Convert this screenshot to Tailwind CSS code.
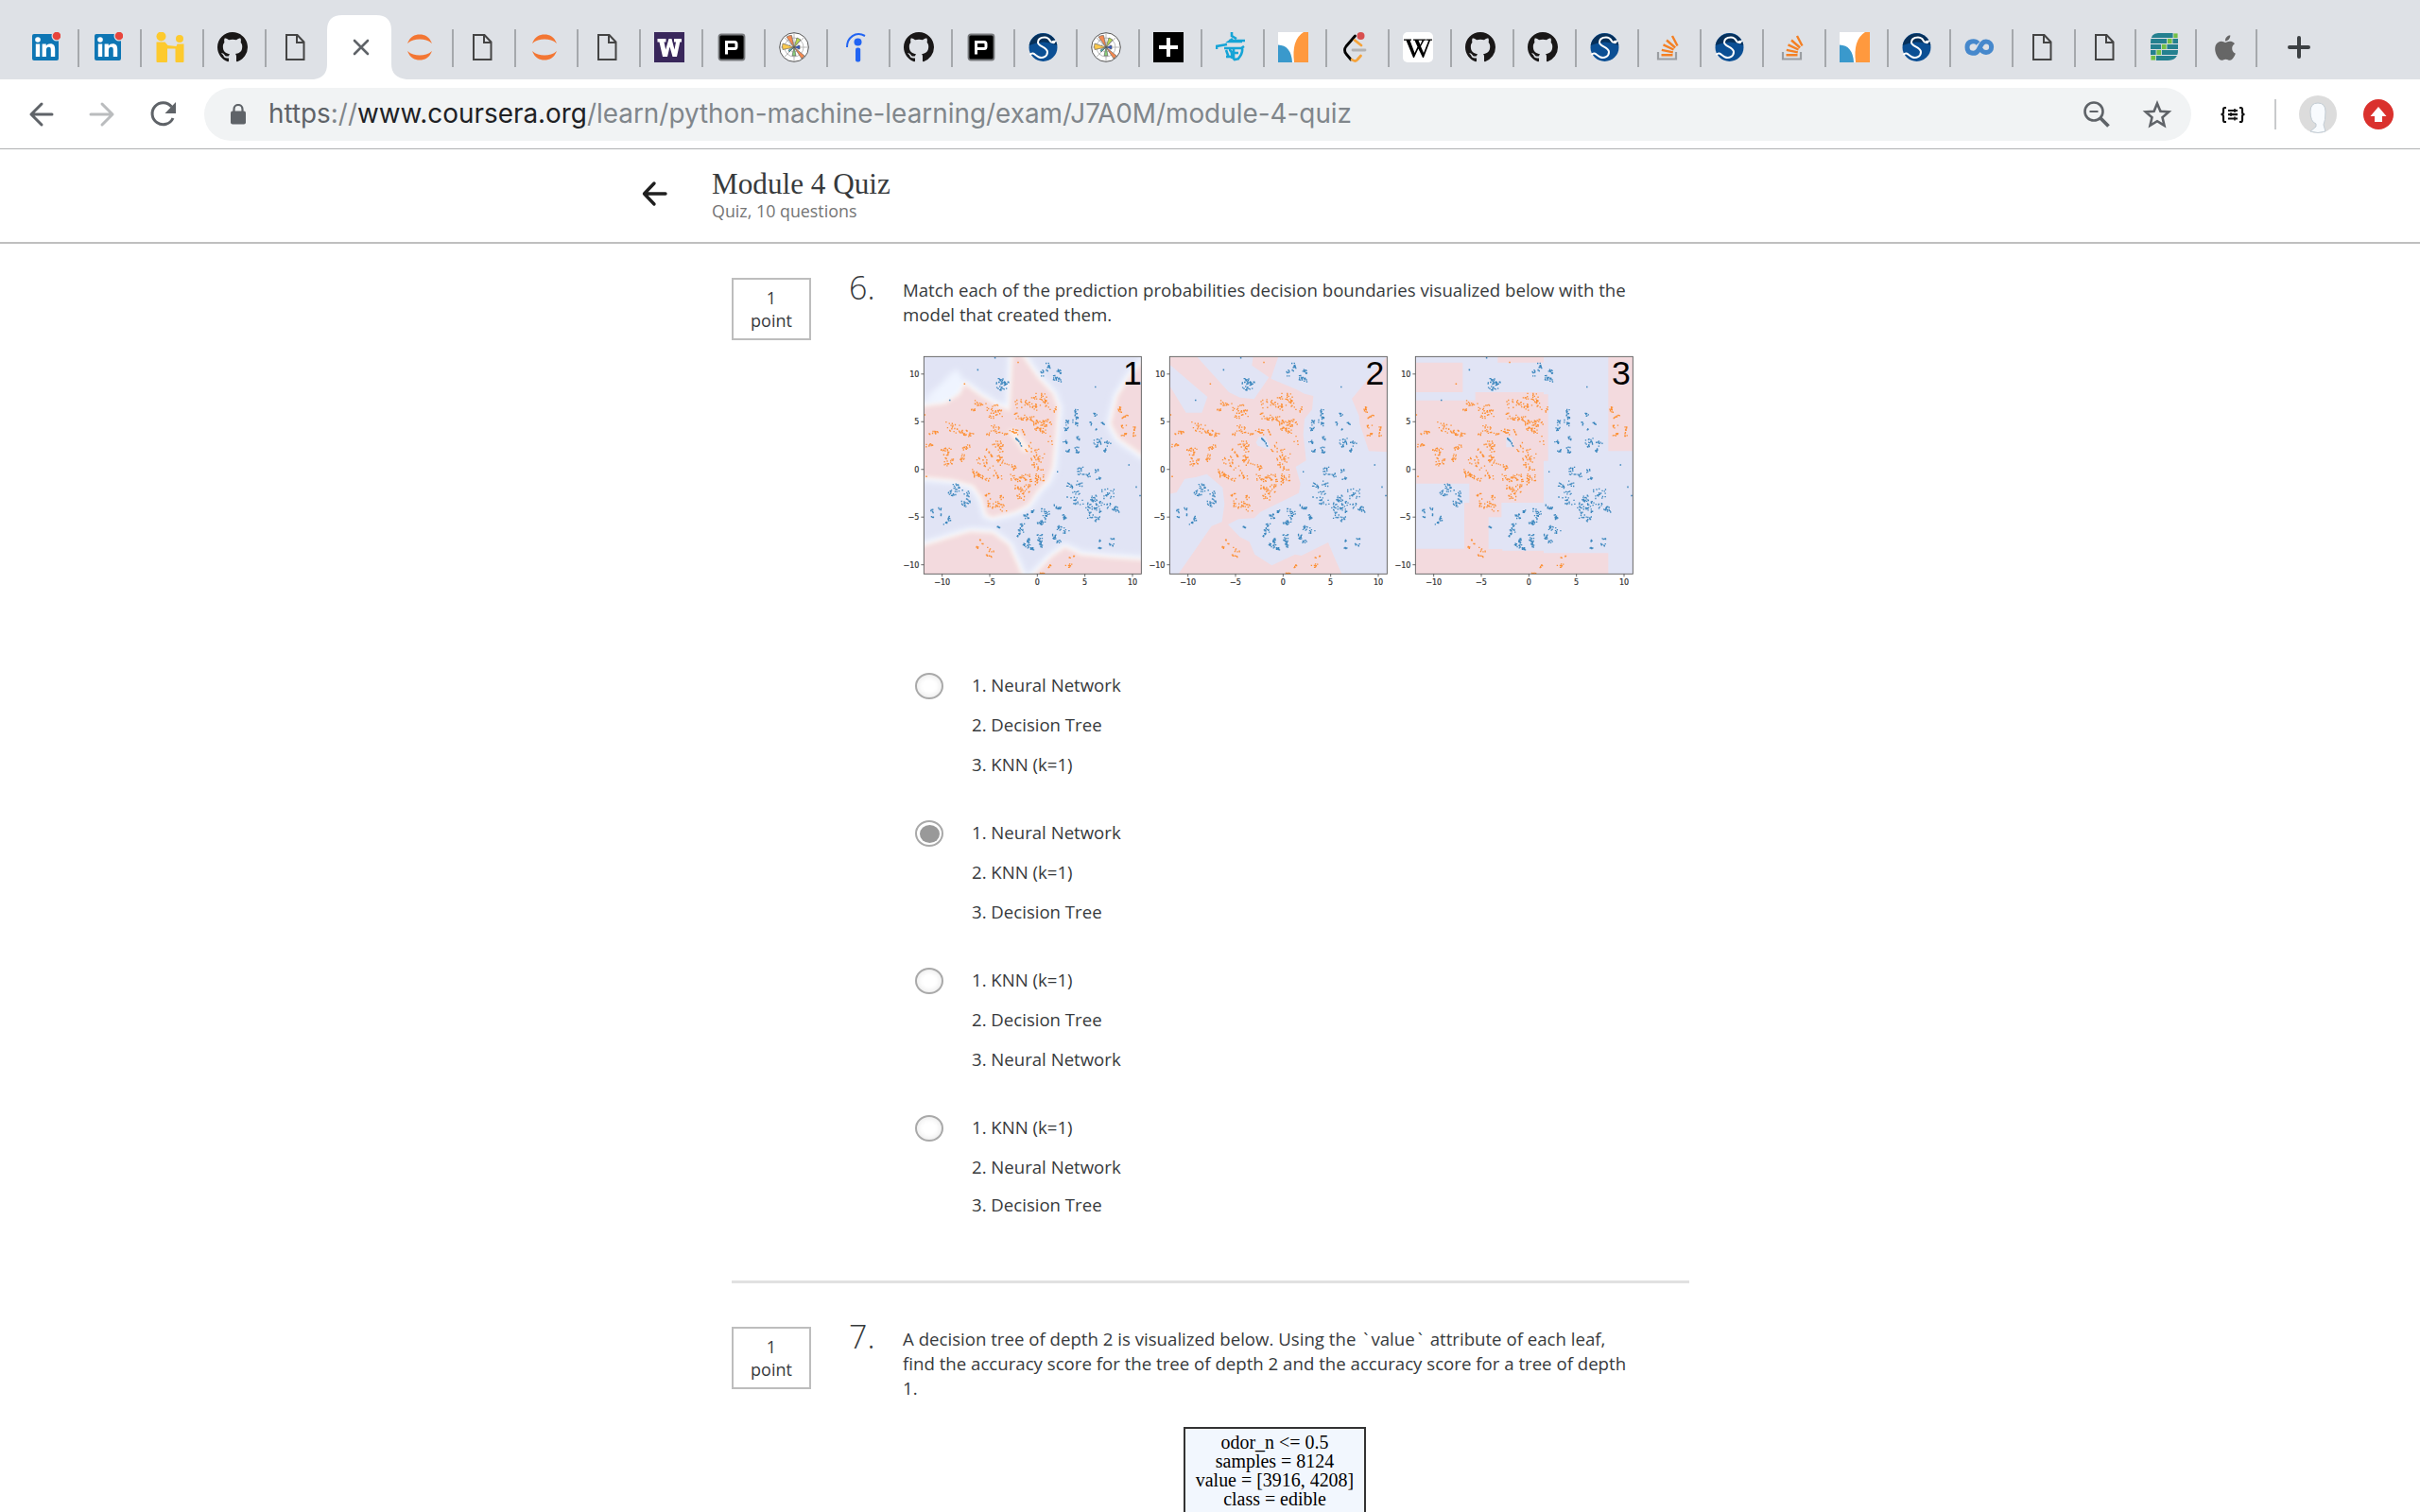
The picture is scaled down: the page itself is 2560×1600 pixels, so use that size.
<!DOCTYPE html>
<html lang="en">
<head>
<meta charset="utf-8">
<title>Module 4 Quiz</title>
<script src="https://cdn.jsdelivr.net/npm/@tailwindcss/browser@4"></script>
</head>
<body class="w-[2560px] h-[1600px] overflow-hidden bg-white font-['Open_Sans',sans-serif] text-[#373a3c]">
<svg class="hidden">
  <symbol id="i-linkedin" viewBox="0 0 32 32"><rect x="2" y="2" width="28" height="28" rx="2" fill="#0e76b4"/><g fill="#fff"><circle cx="8" cy="8" r="2.8"/><rect x="5.8" y="12.5" width="4.4" height="13.5"/><path d="M12.6 12.5h4.2v2c1-1.600 2.600-2.300 4.400-2.300 3.800 0 5 2.300 5 6v7.800h-4.400v-7c0-2-.4-3.200-2.200-3.200-2 0-2.700 1.400-2.700 3.200v7h-4.300z"/></g><circle cx="28" cy="4" r="4.900" fill="#e8453c" stroke="#dee1e6" stroke-width="1.200"/></symbol>
  <symbol id="i-hi" viewBox="0 0 32 32"><g fill="#fdca2e"><circle cx="6.500" cy="4.500" r="5"/><circle cx="26" cy="7" r="4"/><path d="M1.500 10.500h9l3 3.500 9 1 1-2.500h7V31q0 1-1 1h-7q-1 0-1-1V17.500h-8.500V31q0 1-1 1h-9.500q-1 0-1-1z"/></g></symbol>
  <symbol id="i-github" viewBox="0 0 16 16"><path fill="#191717" d="M8 0C3.580 0 0 3.580 0 8c0 3.540 2.290 6.530 5.470 7.590.4.070.55-.17.55-.38 0-.19-.01-.82-.01-1.490-2.010.37-2.530-.49-2.690-.94-.09-.23-.48-.94-.82-1.130-.28-.15-.68-.52-.01-.53.63-.01 1.080.58 1.230.82.720 1.210 1.870.87 2.330.66.070-.52.280-.87.510-1.070-1.780-.2-3.640-.89-3.640-3.950 0-.87.310-1.590.82-2.150-.08-.2-.36-1.020.08-2.120 0 0 .67-.21 2.200.82.640-.18 1.320-.27 2-.27s1.360.09 2 .27c1.530-1.040 2.200-.82 2.200-.82.440 1.100.16 1.920.08 2.120.51.560.82 1.270.82 2.150 0 3.070-1.870 3.750-3.650 3.950.29.250.54.730.54 1.480 0 1.070-.01 1.930-.01 2.200 0 .21.15.46.55.38A8.010 8.010 0 0 0 16 8c0-4.420-3.580-8-8-8z"/></symbol>
  <symbol id="i-doc" viewBox="0 0 32 32"><path d="M7 3h11.500l7 7.500V29H7zM18 3v8h7.500" fill="none" stroke="#444" stroke-width="2"/></symbol>
  <symbol id="i-jupyter" viewBox="0 0 32 32"><path fill="#f37633" d="M3 12C6 4.500 10.500 2.500 16 2.500S26 4.500 29 12C25 8.500 21 7.500 16 7.500S7 8.500 3 12zM3 20c4 3.500 8 4.500 13 4.500s9-1 13-4.500c-3 7.500-7.500 9.500-13 9.500S6 27.500 3 20z"/></symbol>
  <symbol id="i-uw" viewBox="0 0 32 32"><path fill="#39275b" d="M0 0h32v32H0z"/><path fill="#fff" d="M3.500 7h9v3.500h-2l1.700 8L15.500 7h3l3 11.500 1.500-8h-2V7h8v3.500h-1.700L24 26h-4.500L16.500 15.500 14 26H9L5.500 10.500h-2z"/></symbol>
  <symbol id="i-p" viewBox="0 0 32 32"><rect x="2.500" y="2.500" width="27" height="27" rx="2.500" fill="#000" stroke="#77797c" stroke-width="1.800"/><path d="M10.500 23.500V10.500H19q2 0 2 2v3q0 2-2 2h-8" fill="none" stroke="#fff" stroke-width="3"/></symbol>
  <symbol id="i-mpl" viewBox="0 0 32 32"><circle cx="16" cy="16" r="15.300" fill="#fff" stroke="#555" stroke-width="1"/><g fill="none" stroke="#aaa" stroke-width=".8"><circle cx="16" cy="16" r="5"/><circle cx="16" cy="16" r="10"/><path d="M1 16h30M16 1v30M5.500 5.500l21 21M26.500 5.500l-21 21"/></g><g stroke="#555" stroke-width=".6"><path d="M16 16 8 5q3-2 5.500-1.500z" fill="#f58a50"/><path d="M16 16 4 18.500q-1-4 0-6.500z" fill="#fbc94e"/><path d="m16 16 3-10 4 2z" fill="#b9dc50"/><path d="m16 16 11 9-3 3z" fill="#f58a50"/><path d="M16 16l2 9h-4z" fill="#8ad07a"/><path d="M16 16l6-2v4z" fill="#3158c8"/><path d="m16 16-6 3 1 2z" fill="#45b8c0"/></g></symbol>
  <symbol id="i-indeed" viewBox="0 0 32 32"><g fill="#2164f3"><circle cx="17.500" cy="10.500" r="4"/><rect x="15" y="16.500" width="5.200" height="15" rx="2"/></g><path d="M6 16C6 6 15-1.500 25 4" fill="none" stroke="#2164f3" stroke-width="2"/></symbol>
  <symbol id="i-scipy" viewBox="0 0 32 32"><circle cx="15.500" cy="16" r="15" fill="#0b4f94"/><path d="M.7 14a15 15 0 0 1 29.600 0q-14-7-29.600 0z" fill="#06305a"/><path d="M1.500 24C5 20 7 25 11 26.500S20 26 20 21 10 15 10 11s3-5.500 7-5.500 5 2 6 4 3 1.500 6-.5" fill="none" stroke="#fff" stroke-width="2"/><circle cx="26.500" cy="10.500" r="1.800" fill="#fff"/></symbol>
  <symbol id="i-plus" viewBox="0 0 32 32"><path fill="#000" d="M0 0h32v32H0z"/><path d="M16 6v20M6 16h20" stroke="#fff" stroke-width="4"/></symbol>
  <symbol id="i-teal" viewBox="0 0 32 32"><g fill="none" stroke="#16a4d6" stroke-width="2.600"><path d="M17 0v4l5 3M1 18v-3l11-2M14 9h17M18 7l-4 3h14M9 17h18l3-2M11 19l3 8M14 19q4 0 3 9M19 28V18M24 28q5-6 4-11M18 22h6M11 26h6l3 3 5-1"/></g></symbol>
  <symbol id="i-fan" viewBox="0 0 32 32"><path fill="#fff" d="M0 0h32v32H0z"/><path fill="#3a99cc" d="M0 13.500Q14 14 15 32H0z"/><path fill="#ff993e" d="M27 0h5v32H17Q14 8 27 0z"/></symbol>
  <symbol id="i-leet" viewBox="0 0 32 32"><g fill="none" stroke-width="2.800" stroke-linecap="round" stroke-linejoin="round"><path d="m15.500 4-9.500 11q-3 4 0 8l5 6" stroke="#000"/><path d="m15 8.500 7 5.500M12 29q4 3 6 0l3.500-4" stroke="#f5a33a"/><path d="M13 19h13" stroke="#b3b3b3"/></g><circle cx="21.500" cy="4" r="4" fill="#d84f4f"/></symbol>
  <symbol id="i-wiki" viewBox="0 0 32 32"><rect width="32" height="32" rx="5" fill="#fff"/><path d="M1 7.500h8v1.200H7.500L12.500 22l3-6.500-3-6.800H11V7.500h7.500v1.200h-2l2 4.600 2-4.600h-2V7.500h6v1.200h-2L19 15l3 7 5.200-13.300H25V7.500h6v1.200h-2L22 27h-1l-4.600-9.500L12 27h-1L3.500 8.700H1z"/></symbol>
  <symbol id="i-so" viewBox="0 0 32 32"><path d="M6 21v7.500h19V21" fill="none" stroke="#9b9ea2" stroke-width="2.200"/><g stroke="#f48024" stroke-width="2.400"><path d="M9.500 24.300h12M9.800 18.800l12 2.500M11.500 13.300l11 5.200M15 8.500l9.200 8M21 4l5.500 10.500"/></g></symbol>
  <symbol id="i-coursera" viewBox="0 0 32 32"><path d="M14.500 12C11.500 8.500 3 9 3 16s8.500 8 11.500 3.500S18 10 23 10c7.500 0 7.500 11.500 0 11.500-3 0-5-2-6-4" fill="none" stroke="#4688cc" stroke-width="5"/></symbol>
  <symbol id="i-bricks" viewBox="0 0 32 32"><path d="M9 1h21v18q0 11-11 11H1V11Q1 1 9 1z" fill="#24808f"/><path d="M1 6.500h29M1 12.500h29M1 18.500h29M1 24.500h29" stroke="#dee1e6"/><g fill="#72bf44" stroke="#dee1e6" stroke-width=".8"><path d="M25 1h5v5.500h-5zM18.500 6.500H24v6h-5.500zM12.500 12.500H18v6h-5.500zM7 18.500h5.500v6H7zM1 24.500h5.500V30H1z"/></g></symbol>
  <symbol id="i-apple" viewBox="-2 -3 28 29"><path fill="#666" d="M12.152 6.896c-.948 0-2.415-1.078-3.960-1.040-2.040.027-3.910 1.183-4.961 3.014-2.117 3.675-.546 9.103 1.519 12.090 1.013 1.454 2.208 3.090 3.792 3.039 1.520-.065 2.090-.987 3.935-.987 1.831 0 2.350.987 3.960.948 1.637-.026 2.676-1.480 3.676-2.948 1.156-1.688 1.636-3.325 1.662-3.415-.039-.013-3.182-1.221-3.220-4.857-.026-3.040 2.480-4.494 2.597-4.559-1.429-2.090-3.623-2.324-4.390-2.376-2-.156-3.675 1.090-4.610 1.090zM15.530 3.830c.843-1.012 1.400-2.427 1.245-3.830-1.207.052-2.662.805-3.532 1.818-.780.896-1.454 2.338-1.273 3.714 1.338.104 2.715-.688 3.559-1.701"/></symbol>
  <symbol id="i-close" viewBox="0 0 32 32"><path d="m13 9 14 14M27 9 13 23" stroke="#5f6368" stroke-width="2.600" stroke-linecap="round"/></symbol>
</svg>

<header>
  <div id="tabs" class="flex h-[84px] items-start bg-[#dee1e6] pl-[18px]"></div>
  <div class="flex h-[74px] items-center border-b border-[#b0b1b3] pl-7">
    <svg class="size-8" viewBox="0 0 32 32" fill="none" stroke="#5f6368" stroke-width="3" stroke-linecap="round" stroke-linejoin="round"><path d="M27 16H5M16 5 5 16l11 11"/></svg>
    <svg class="ml-8 size-8" viewBox="0 0 32 32" fill="none" stroke="#babcbe" stroke-width="3" stroke-linecap="round" stroke-linejoin="round"><path d="M4 16h23M16 5l11 11-11 11"/></svg>
    <svg class="ml-8 size-8" viewBox="0 0 32 32"><path d="M25.500 8A11.500 11.500 0 1 0 27 20" fill="none" stroke="#5f6368" stroke-width="3"/><path d="M30 3v12H18.500z" fill="#5f6368"/></svg>
    <div class="ml-7 flex h-14 w-[2102px] items-center rounded-full bg-[#f1f3f4] pl-7 pr-5">
      <svg class="h-[22px] w-4" viewBox="0 0 16 22"><rect y="7.500" width="16" height="14" rx="2" fill="#5f6368"/><path d="M3.500 9V5.500a4.500 4.500 0 0 1 9 0V9" fill="none" stroke="#5f6368" stroke-width="2.200"/></svg>
      <span class="ml-6 font-[Inter,sans-serif] text-[27.880px] whitespace-nowrap text-[#80868b]"><span class="text-[#5f6368]">https</span>://<span class="text-[#202124]">www.coursera.org</span>/learn/python-machine-learning/exam/J7A0M/module-4-quiz</span>
      <svg class="ml-auto h-8 w-8" viewBox="0 0 32 32" fill="none" stroke="#5f6368" stroke-width="2.600"><circle cx="13" cy="13" r="9.500"/><path d="M8.500 13h9" stroke-width="2"/><path d="m19.500 19.500 9 9" stroke-width="3.800"/></svg>
      <svg class="ml-8 h-8 w-8" viewBox="0 0 32 32" fill="none" stroke="#5f6368" stroke-width="2.600"><path d="m16 4.500 3.400 8.200 8.800.7-6.700 5.800 2 8.600L16 23.200l-7.500 4.600 2-8.600-6.700-5.800 8.800-.7z"/></svg>
    </div>
    <svg class="ml-7 h-8 w-8" viewBox="0 0 32 32" fill="none" stroke="#111" stroke-width="2.200"><path d="M9 9H7.500Q6 9 6 11v3q0 2-2.500 2Q6 16 6 18v4q0 2 1.500 2H9M23 9h1.500Q26 9 26 11v3q0 2 2.500 2-2.500 0-2.500 2v4q0 2-1.500 2H23M11 12h10M11 16.200h10M11 20.500h10" /><path d="M18 10v4M14 14v4M18 18.500v4" stroke-width="1.500"/></svg>
    <div class="ml-7 h-8 w-0.5 bg-[#c8cacc]"></div>
    <svg class="ml-6 size-10" viewBox="0 0 40 40"><circle cx="20" cy="20" r="20" fill="#dcdcdc"/><path d="M12 17q0-9 8-9t8 9q0 10-2 14l2 7q-8 3-16 0l6-5v-3q-6-2-6-13z" fill="#f8fbfe" stroke="#c2ccd4"/></svg>
    <svg class="ml-7 size-8" viewBox="0 0 32 32"><circle cx="16" cy="16" r="16" fill="#da312d"/><path d="m16 8 8.500 10H20v6h-8v-6H7.500z" fill="#fff"/></svg>
  </div>
  <div class="flex h-[100px] items-start border-b-2 border-[#bfbfbf] pt-[20px] pl-[678px]">
    <svg class="mt-[12px] size-[30px]" viewBox="0 0 30 30" fill="none" stroke="#1f1f1f" stroke-width="3.400" stroke-linecap="round" stroke-linejoin="round"><path d="M26 15H4M14 4 3.500 15 14 26"/></svg>
    <div class="ml-[45px]">
      <h1 class="font-['Liberation_Serif',serif] text-[31.200px] leading-[33px]">Module 4 Quiz</h1>
      <p class="text-[17.850px] leading-[24px] text-[#757575]">Quiz, 10 questions</p>
    </div>
  </div>
</header>

<main class="ml-[774px] w-[1013px] pt-[36px]">
  <section class="flex h-[1064px] items-start border-b-[3px] border-[#e1e1e1]">
    <div class="flex h-[66px] w-[84px] flex-col items-center justify-center border-2 border-[#bdbdbd] text-[18px] leading-6"><span>1</span><span>point</span></div>
    <div class="-mt-[14px] ml-10 w-[57px] text-[34px] leading-[48px] font-light">6.</div>
    <div class="w-[780px]">
      <p class="text-[18.650px] leading-[26px] whitespace-nowrap">Match each of the prediction probabilities decision boundaries visualized below with the<br>model that created them.</p>
      <div id="plots" class="mt-[14px] flex h-[280px]"></div>
      <ul id="options" class="mt-[72px] ml-[13px]"></ul>
    </div>
  </section>
  <section class="flex items-start pt-[46px]">
    <div class="flex h-[66px] w-[84px] flex-col items-center justify-center border-2 border-[#bdbdbd] text-[18px] leading-6"><span>1</span><span>point</span></div>
    <div class="-mt-[14px] ml-10 w-[57px] text-[34px] leading-[48px] font-light">7.</div>
    <div class="w-[780px]">
      <p class="text-[18.650px] leading-[26px] whitespace-nowrap">A decision tree of depth 2 is visualized below. Using the <span class="px-[3px]">`</span>value<span class="px-[3px]">`</span> attribute of each leaf,<br>find the accuracy score for the tree of depth 2 and the accuracy score for a tree of depth<br>1.</p>
      <div class="mt-7 ml-[297px] flex h-[110px] w-[193px] flex-col items-center border-2 border-[#333] bg-[#f2f7fe] pt-1 font-['Liberation_Serif',serif] text-[19.950px] leading-[20px] whitespace-nowrap text-black"><span>odor_n &lt;= 0.5</span><span>samples = 8124</span><span>value = [3916, 4208]</span><span>class = edible</span></div>
    </div>
  </section>
</main>

<script>
const names = 'linkedin linkedin hi github doc close jupyter doc jupyter doc uw p mpl indeed github p scipy mpl plus teal fan leet wiki github github scipy so scipy so fan scipy coursera doc doc bricks apple'.split(' ');
document.getElementById('tabs').innerHTML = names.map((n, i) => {
  const icon = `<svg class="relative mt-[3px] size-8"><use href="#i-${n}"/></svg>`;
  const back = n === 'close' ? '<svg class="absolute -left-4 -top-[15px] h-[68px] w-[98px]" viewBox="0 0 98 68"><path d="M0 68Q14 66 14 52V16Q14 0 30 0H66Q82 0 82 16V52Q82 66 98 68z" fill="#fff"/></svg>' : '';
  const line = i === 4 || i === 5 ? '' : '<i class="ml-auto h-10 w-0.5 bg-[#a5a8ac]"></i>';
  return `<div class="${i > 32 ? 'w-16' : 'w-[66px]'} relative mt-[31px] flex h-10 shrink-0 items-start pl-[14px]">${back}${icon}${line}</div>`;
}).join('') + '<svg class="mt-[34px] ml-7 size-8" viewBox="0 0 32 32"><path d="M16 6v20M6 16h20" stroke="#3c4043" stroke-width="4" stroke-linecap="round"/></svg>';

const choices = [['Neural Network', 'Decision Tree', 'KNN (k=1)'], ['Neural Network', 'KNN (k=1)', 'Decision Tree'], ['KNN (k=1)', 'Decision Tree', 'Neural Network'], ['KNN (k=1)', 'Neural Network', 'Decision Tree']];
document.getElementById('options').innerHTML = choices.map((c, i) => `<li class="flex h-[156px] items-start">
  <span class="flex h-[28px] w-[30px] items-center justify-center rounded-[50%] border-2 border-[#a9a9a9] ${i === 1 ? '' : 'shadow-[inset_0_0_5px_2px_#eee]'}">${i === 1 ? '<b class="h-[19px] w-[21px] rounded-[50%] bg-[#999]"></b>' : ''}</span>
  <div class="-mt-[8px] ml-[30px] text-[18.600px] whitespace-nowrap">${c.map((t, k) => `<p class="${i === 3 && k === 2 ? 'leading-[38px]' : 'leading-[42px]'}">${k + 1}. ${t}</p>`).join('')}</div></li>`).join('');

// Sample strokes: x1, y1, x2, y2, count, jitter
const orange = [[268,196,290,206,12,5],[258,222,276,222,6,3],[308,212,352,214,16,8],[316,232,356,230,16,8],[325,244,330,246,4,3],[192,272,228,285,26,8],[236,284,246,296,6,5],[240,300,266,300,12,4],[132,296,158,291,12,3],[122,336,140,328,10,3],[168,352,198,344,14,4],[176,358,192,364,8,4],[236,344,258,336,14,4],[228,382,240,368,12,4],[180,378,184,396,8,4],[190,394,206,374,10,4],[334,284,352,280,16,8],[314,300,322,298,5,3],[360,294,368,298,3,3],[336,330,360,330,14,6],[345,340,366,350,12,6],[310,345,330,370,12,2],[350,360,364,372,8,5],[286,376,320,400,22,10],[342,374,366,392,14,7],[374,396,402,406,14,5],[270,410,280,430,16,6],[284,426,300,440,14,4],[336,420,354,434,14,5],[308,442,324,444,6,3],[306,494,324,486,10,2],[318,516,346,524,18,8],[334,530,366,530,14,8],[356,486,362,505,6,4],[392,436,432,434,20,6],[400,450,436,478,30,10],[402,490,430,500,10,6],[440,430,456,466,14,6],[464,430,490,440,16,7],[470,455,482,445,8,5],[410,196,416,215,8,6],[422,190,440,200,6,4],[452,178,500,176,16,7],[440,205,480,215,22,7],[490,190,514,215,16,5],[526,214,530,228,6,4],[400,232,424,248,16,6],[434,244,456,252,14,6],[462,262,500,278,32,9],[466,282,500,290,14,5],[492,250,510,264,10,6],[504,290,514,330,5,4],[390,290,410,294,14,5],[428,284,434,304,6,3],[366,300,382,296,3,2],[448,320,440,354,6,4],[454,350,488,356,8,6],[462,372,484,378,18,7],[460,396,482,408,16,6],[726,228,738,222,8,4],[732,215,738,212,3,2],[738,248,764,236,12,2],[742,276,752,274,5,3],[742,300,760,300,8,3],[774,274,782,290,8,4],[776,300,782,304,5,3],[288,632,292,636,5,2],[294,644,300,648,3,2],[278,656,286,660,6,3],[318,660,324,672,5,3],[310,682,326,688,8,2],[334,668,334,672,2,1],[506,722,514,714,7,2],[480,739,496,739,4,1],[574,690,578,692,3,1],[586,686,590,686,4,1],[564,714,580,718,8,4],[411,70,411,70,3,.5],[241,139,241,139,3,.5],[115,237,115,237,3,.5],[120,433,120,433,3,.5]];
const blue = [[340,136,358,122,12,5],[362,124,366,140,12,5],[372,134,378,146,10,5],[346,148,364,156,12,4],[486,96,488,112,10,3],[504,78,512,90,14,4],[502,96,506,98,3,2],[536,92,546,106,14,4],[526,118,534,126,12,4],[538,120,544,128,10,3],[404,311,414,322,18,1],[414,322,422,336,6,1],[586,230,598,225,10,4],[594,240,600,246,8,4],[564,254,570,268,10,4],[562,282,574,286,10,4],[590,256,602,272,10,5],[558,318,564,328,8,3],[564,348,574,352,8,3],[596,306,604,318,8,3],[594,352,600,356,8,3],[590,342,604,340,4,2],[652,230,658,240,8,3],[642,256,646,272,6,3],[656,282,660,284,4,2],[678,256,682,270,8,3],[656,318,662,344,12,4],[666,310,672,326,8,4],[690,320,700,332,8,4],[684,348,692,352,8,3],[602,412,616,404,12,4],[600,424,620,420,6,5],[632,420,634,436,8,4],[658,412,664,418,6,4],[664,436,678,442,8,4],[570,458,584,466,12,4],[596,450,610,460,10,5],[588,488,610,484,8,4],[588,504,600,524,16,6],[567,498,567,498,2,1],[626,516,640,544,20,8],[646,505,664,495,12,6],[654,520,672,512,14,7],[656,530,668,545,12,6],[648,570,668,566,12,6],[676,480,710,478,10,6],[680,495,712,492,10,6],[690,518,700,525,8,6],[706,530,726,542,16,6],[630,560,640,562,4,4],[664,632,674,640,4,3],[666,658,676,662,10,2],[700,630,716,630,6,2],[702,650,714,652,8,3],[210,460,224,466,12,5],[190,478,196,486,6,4],[200,490,210,496,8,3],[214,476,234,472,8,4],[244,482,254,496,10,5],[234,516,252,524,14,4],[248,500,256,515,8,3],[136,540,140,544,6,3],[136,560,142,562,6,2],[158,530,164,540,6,3],[164,552,168,556,4,2],[190,560,194,574,8,3],[176,583,188,578,6,2],[344,591,353,596,12,1],[428,552,442,562,14,4],[452,548,462,536,8,3],[484,542,510,552,14,5],[492,560,506,566,8,4],[474,578,494,580,16,4],[418,584,430,590,10,4],[414,600,426,604,10,4],[408,624,416,614,8,2],[428,646,440,656,10,5],[440,632,450,650,12,4],[448,660,460,662,14,3],[476,620,492,616,6,3],[474,632,488,636,12,4],[476,646,486,654,12,4],[528,526,544,534,14,3],[554,554,562,572,12,3],[540,595,546,600,12,4],[550,602,568,606,8,5],[524,622,532,630,12,4],[534,638,544,640,8,3],[338,56,338,56,3,.5],[283,94,283,94,3,.5],[194,191,194,191,3,.5],[656,148,656,148,3,.5],[536,418,536,418,3,.5],[763,396,763,396,3,.5],[786,466,786,466,3,.5],[798,493,798,493,3,.5]];
let seed = 7;
const rnd = () => (seed = (seed * 16807) % 2147483647) / 2147483647;
const dots = list => list.map(([a, b, c, d, n, j]) => Array.from({ length: n }, () => {
  const t = rnd(), s = j > 2 ? 1.6 : 1;
  const jx = rnd() * 2 - 1, skip = rnd(), jy = rnd() * 2 - 1;
  return `M${(a + (c - a) * t + jx * j * s - 2).toFixed(1)} ${(b + (d - b) * t + jy * j * s - 2).toFixed(1)}h4v4h-4z`;
}).join('')).join('');
const points = `<path d="${dots(orange)}" fill="#ff7f0e" fill-opacity=".82"/><path d="${dots(blue)}" fill="#1f77b4" fill-opacity=".85"/>`;

const nn = 'M90 215L180 203L228 172L242 142L290 178L340 208L386 226L396 40L416 40L470 118L520 172L536 215L528 300L518 400L503 442L468 480L442 520L400 542L330 560L312 552L298 500L270 460L200 440L90 430zM820 60L770 112L728 180L707 265L732 310L820 372zM90 662L200 627L260 610L330 614L380 652L432 770L90 770zM450 760L520 688L560 660L610 684L700 693L830 702V770z';
const regions = [
  `<rect x="112" y="52" width="690" height="690" fill="#e1e4f5"/><g filter="url(#soft2)"><path d="${nn}" fill="#fff" stroke="#f1f6ff" stroke-width="32" stroke-linejoin="round"/><path d="M112 190L215 90L240 130L200 190z" fill="#eff4ff"/></g><g filter="url(#soft)"><path d="${nn}" fill="none" stroke="#fdf3ec" stroke-width="12"/><path d="${nn}" fill="#f3dade"/><path d="M386 290L405 290L445 345L430 352z" fill="#fcefea" stroke="#fcefea" stroke-width="10"/></g>`,
  `<rect x="112" y="52" width="690" height="690" fill="#f3dade"/><g transform="translate(30 0)" fill="#e1e4f5"><path d="M82 77L202 180L184 230H134L82 145zM168 52H347L343 80L397 118L350 187L305 182L270 165zM427 52H772L660 186L683 240L685 265L714 352L772 355V742H628L605 690L585 642L500 684L480 680L406 715L352 680L335 640L305 625L267 585L300 568L350 565L370 545L492 485L497 455L482 402L515 382L506 300L510 250L534 220L538 177L510 170L482 155L403 122zM82 488L104 483L130 440L165 435L200 425L250 468L256 520L248 577L215 590L110 742H82zM356 325L365 307L385 305L402 340L395 346L362 335z"/></g>`,
  `<rect x="112" y="52" width="690" height="690" fill="#f3dade"/><g transform="translate(28 0)" fill="#e1e4f5"><path d="M84 52H345V71H491V52H696V352H774V742H696V676H491V668H360V663H316V562H357V516H491V383H505V172H491V165H274V191H84V165H234V71H84zM84 455H255V516H239V662H84zM372 308H392V340H372z"/></g>`
];
const ticks = [-10, -5, 0, 5, 10].map((v, i) => {
  const x = 170 + i * 151, y = 713 - i * 151.400, s = String(v).replace('-', '−');
  return `<path d="M${x} 742v9M112 ${y}h-9" stroke="#444" stroke-width="2.400"/><text x="${x}" y="776" text-anchor="middle">${s}</text><text x="97" y="${y + 9}" text-anchor="end">${s}</text>`;
}).join('');
document.getElementById('plots').innerHTML = regions.map((r, i) => `<svg class="h-[280px] w-[260px] overflow-visible" viewBox="45 0 780 840">
  <defs><clipPath id="frame"><rect x="112" y="52" width="690" height="690"/></clipPath><filter id="soft"><feGaussianBlur stdDeviation="6"/></filter><filter id="soft2"><feGaussianBlur stdDeviation="10"/></filter></defs>
  <g clip-path="url(#frame)">${r}${points}</g>
  <rect x="112" y="52" width="690" height="690" fill="none" stroke="#555" stroke-width="2.600"/>
  <g font-family="DejaVu Sans" font-size="24" fill="#333" stroke="#333" stroke-width=".6">${ticks}</g>
  <text x="${[774, 763, 765][i]}" y="141" text-anchor="middle" font-family="Liberation Sans" font-size="107" fill="#000">${i + 1}</text></svg>`).join('');
</script>
</body>
</html>
